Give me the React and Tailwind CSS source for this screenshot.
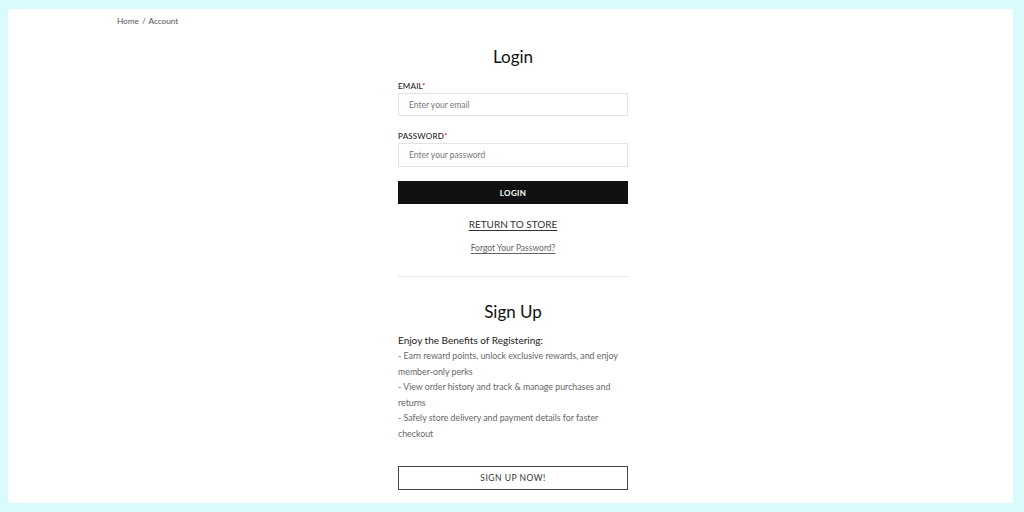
const App = () => {
  return (
    <div className="min-h-screen bg-[#dafbfe] pt-[9px] pb-[9px] pl-[8px] pr-[11px]" style={{ fontFamily: 'Lato, "Open Sans", sans-serif' }}>
      <div className="bg-white h-[494px]">
        {/* Breadcrumb */}
        <div className="pl-[109px] pt-[6px] text-[8.2px] text-[#555] leading-[12px]">
          Home <span className="mx-[1px]">/</span> Account
        </div>

        {/* Login form */}
        <div className="w-[230px] ml-[390px]">
          <h1 className="text-center text-[17px] text-[#111] leading-[20px] mt-[20px]">Login</h1>

          <label className="block mt-[14px] text-[8px] font-medium text-[#222] leading-[10px] tracking-[0.2px]">
            EMAIL<span className="text-[#c00]">*</span>
          </label>
          <input
            className="block mt-[2px] w-full h-[23px] border border-[#e3e3e3] px-[10px] text-[8.5px] placeholder:text-[#777] outline-none"
            placeholder="Enter your email"
          />

          <label className="block mt-[15px] text-[8px] font-medium text-[#222] leading-[10px] tracking-[0.2px]">
            PASSWORD<span className="text-[#c00]">*</span>
          </label>
          <input
            type="password"
            className="block mt-[2px] w-full h-[24px] border border-[#e3e3e3] px-[10px] text-[8.5px] placeholder:text-[#777] outline-none"
            placeholder="Enter your password"
          />

          <button className="mt-[14px] w-full h-[23px] bg-[#111] text-white text-[8px] font-bold tracking-[0.3px] flex items-center justify-center">
            LOGIN
          </button>

          <div className="mt-[11px] text-center leading-[14px]">
            <a className="text-[10px] text-[#333] underline underline-offset-2">RETURN TO STORE</a>
          </div>
          <div className="mt-[8px] text-center leading-[12px]">
            <a className="text-[8.5px] text-[#666] underline underline-offset-2">Forgot Your Password?</a>
          </div>

          <div className="mt-[22px] border-t border-[#e8e8e8]"></div>

          <h2 className="text-center text-[17px] text-[#111] leading-[20px] mt-[25px]">Sign Up</h2>

          <p className="mt-[11px] text-[10px] text-[#222] leading-[14px]">Enjoy the Benefits of Registering:</p>
          <ul className="mt-[1px] text-[8.8px] text-[#666] leading-[15.5px]">
            <li>- Earn reward points, unlock exclusive rewards, and enjoy member-only perks</li>
            <li>- View order history and track &amp; manage purchases and returns</li>
            <li>- Safely store delivery and payment details for faster checkout</li>
          </ul>

          <button className="mt-[25px] w-full h-[24px] border-[1.5px] border-[#444] text-[8.5px] text-[#333] tracking-[0.5px] flex items-center justify-center">
            SIGN UP NOW!
          </button>
        </div>
      </div>
    </div>
  );
};

export default App;
